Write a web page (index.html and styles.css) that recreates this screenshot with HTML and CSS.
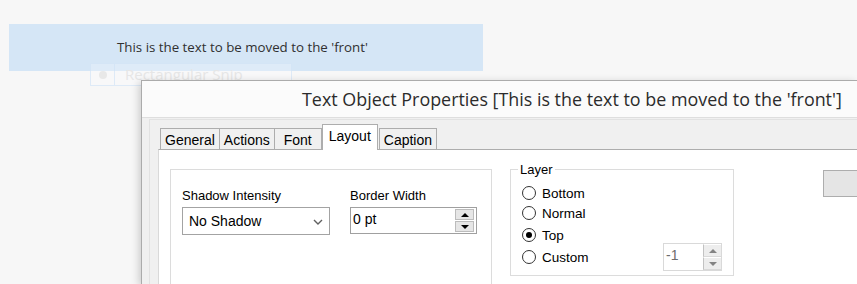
FILE: index.html
```html
<!DOCTYPE html>
<html lang="en">
<head>
    <meta charset="UTF-8">
    <title>Text Object Properties</title>
    <link rel="stylesheet" href="styles.css">
</head>
<body>
    <div class="banner">This is the text to be moved to the 'front'</div>

    <div class="snip">
        <span class="snip-dot"></span>
        <span class="snip-label">Rectangular Snip</span>
    </div>

    <div class="dialog">
        <div class="dialog-title">Text Object Properties [This is the text to be moved to the 'front']</div>
        <div class="dialog-body">
            <div class="tab-control">
                <div class="tabs">
                    <span class="tab">General</span>
                    <span class="tab">Actions</span>
                    <span class="tab">Font</span>
                    <span class="tab tab-active">Layout</span>
                    <span class="tab">Caption</span>
                </div>
                <div class="tab-panel">
                    <div class="group">
                        <div class="field field-shadow">
                            <span class="field-label">Shadow Intensity</span>
                            <div class="select">
                                <span>No Shadow</span>
                                <svg class="chevron" width="10" height="6" viewBox="0 0 10 6">
                                    <path d="M1 1 L5 5 L9 1" fill="none" stroke="#606060" stroke-width="1.4"/>
                                </svg>
                            </div>
                        </div>
                        <div class="field">
                            <span class="field-label">Border Width</span>
                            <div class="spinner spinner-wide">
                                <span class="spinner-value">0 pt</span>
                                <div class="spinner-buttons">
                                    <span class="spin-btn"><span class="arrow-up"></span></span>
                                    <span class="spin-btn"><span class="arrow-down"></span></span>
                                </div>
                            </div>
                        </div>
                    </div>

                    <fieldset class="layer">
                        <legend>Layer</legend>
                        <div class="radio-row"><span class="radio"></span>Bottom</div>
                        <div class="radio-row"><span class="radio"></span>Normal</div>
                        <div class="radio-row radio-row-tall"><span class="radio radio-checked"></span>Top</div>
                        <div class="radio-row">
                            <span class="radio"></span>Custom
                            <div class="spinner spinner-small spinner-disabled">
                                <span class="spinner-value">-1</span>
                                <div class="spinner-buttons">
                                    <span class="spin-btn"><span class="arrow-up"></span></span>
                                    <span class="spin-btn"><span class="arrow-down"></span></span>
                                </div>
                            </div>
                        </div>
                    </fieldset>

                    <span class="button"></span>
                </div>
            </div>
        </div>
    </div>
</body>
</html>
```

FILE: styles.css
```css
body, html {
    margin: 0;
    padding: 0;
}
body {
    width: 857px;
    height: 284px;
    overflow: hidden;
    position: relative;
    background-color: #f7f7f7;
    font-family: "Liberation Sans", Arial, sans-serif;
    font-size: 13px;
    color: #000;
}

/* text object on the sheet */
.banner {
    margin: 24px 0 0 9px;
    width: 366px;
    height: 47px;
    padding-left: 108px;
    line-height: 46px;
    background-color: #d5e6f6;
    font-family: "Open Sans", sans-serif;
    font-size: 13.3px;
    color: #303030;
    white-space: nowrap;
}

/* faded snipping tool menu item */
.snip {
    position: absolute;
    left: 90px;
    top: 63px;
    width: 200px;
    height: 21px;
    display: flex;
    align-items: center;
    border: 1px solid rgba(205, 225, 245, 0.6);
    background-color: rgba(250, 252, 255, 0.25);
}
.snip-dot {
    width: 8px;
    height: 8px;
    margin: 0 7px 0 8px;
    border-radius: 50%;
    background-color: #e8e8e8;
}
.snip-label {
    height: 100%;
    padding-left: 10px;
    border-left: 1px solid rgba(205, 225, 245, 0.6);
    font-family: "Open Sans", sans-serif;
    font-size: 15px;
    line-height: 21px;
    color: #e6e6e6;
}

/* properties dialog */
.dialog {
    position: absolute;
    left: 141px;
    top: 80px;
    width: 715px;
    height: 203px;
    border-top: 1px solid #ababab;
    border-left: 1px solid #ababab;
    box-shadow: -2px 2px 8px rgba(0, 0, 0, 0.18);
    background-color: #f0f0f0;
}
.dialog-title {
    height: 36px;
    padding-left: 160px;
    line-height: 37px;
    background-color: #fbfbfb;
    border-bottom: 1px solid #dedede;
    font-family: "Open Sans", sans-serif;
    font-size: 17.9px;
    color: #2b2b2b;
    white-space: nowrap;
    overflow: hidden;
}
.dialog-body {
    padding: 1px 0 0 7px;
}
.tab-control {
    height: 160px;
    padding: 4px 0 0 8px;
    border-top: 1px solid #e2e2e2;
    border-left: 1px solid #e2e2e2;
}

.tabs {
    display: flex;
    align-items: flex-end;
    height: 25px;
    margin-left: 2px;
}
.tab {
    height: 20px;
    min-width: 38px;
    padding: 0 4px;
    margin-right: -1px;
    border: 1px solid #adadad;
    border-bottom: none;
    background-color: #f0f0f0;
    font-size: 14px;
    line-height: 22px;
    text-align: center;
}
.tab-active {
    position: relative;
    z-index: 1;
    height: 25px;
    margin: 0 1px -1px 1px;
    padding: 0 6px;
    background-color: #fff;
    line-height: 22px;
}

.tab-panel {
    height: 115px;
    display: flex;
    align-items: flex-start;
    padding: 19px 0 0 11px;
    background-color: #fff;
    border-top: 1px solid #adadad;
    border-left: 1px solid #d9d9d9;
}

.group {
    flex-shrink: 0;
    width: 309px;
    height: 96px;
    display: flex;
    align-items: flex-start;
    padding: 18px 0 0 11px;
    border: 1px solid #dcdcdc;
    border-bottom: none;
}
.field {
    display: flex;
    flex-direction: column;
}
.field-shadow {
    margin-right: 20px;
}
.field-label {
    height: 15px;
    line-height: 15px;
    margin-bottom: 4px;
}
.select {
    width: 134px;
    height: 26px;
    display: flex;
    align-items: center;
    justify-content: space-between;
    padding: 0 6px 0 6px;
    border: 1px solid #a3a3a3;
    font-size: 14px;
}
.chevron {
    margin-top: 2px;
}

.spinner {
    display: flex;
    justify-content: space-between;
    border: 1px solid #a0a0a0;
    background-color: #fff;
}
.spinner-wide {
    width: 125px;
    height: 25px;
}
.spinner-value {
    padding: 3px 0 0 2px;
    font-size: 14px;
}
.spinner-buttons {
    display: flex;
    flex-direction: column;
    justify-content: center;
    gap: 1px;
    padding: 1px 2px 1px 0;
}
.spin-btn {
    width: 17px;
    height: 10px;
    display: flex;
    align-items: center;
    justify-content: center;
    border: 1px solid #bcbcbc;
    background-color: #e6e6e6;
}
.arrow-up {
    border-left: 4px solid transparent;
    border-right: 4px solid transparent;
    border-bottom: 4px solid #000;
}
.arrow-down {
    border-left: 4px solid transparent;
    border-right: 4px solid transparent;
    border-top: 4px solid #000;
}

.spinner-small {
    width: 57px;
    height: 26px;
    margin-left: auto;
}
.spinner-disabled {
    border-color: #d9d9d9;
}
.spinner-disabled .spinner-value {
    padding-left: 2px;
    color: #6d6d6d;
}
.spinner-disabled .spinner-buttons {
    padding: 0;
    gap: 0;
}
.spinner-disabled .spin-btn {
    height: 11px;
    border-color: #d9d9d9;
    border-top-color: #fff;
    border-right: none;
    background-color: #ededed;
    border-left: 1px solid #c2c2c2;
}
.spinner-disabled .arrow-up {
    border-bottom-color: #838383;
}
.spinner-disabled .arrow-down {
    border-top-color: #838383;
}

.layer {
    flex-shrink: 0;
    box-sizing: border-box;
    width: 224px;
    height: 114px;
    margin: -7px 0 0 18px;
    padding: 6px 11px 8px 11px;
    border: 1px solid #dcdcdc;
    min-width: 0;
}
.layer legend {
    padding: 0 2px;
    margin-left: -4px;
    line-height: 15px;
}
.radio-row {
    display: flex;
    align-items: center;
    height: 20px;
    font-size: 13.5px;
}
.radio-row-tall {
    height: 24px;
}
.radio {
    width: 12px;
    height: 12px;
    margin-right: 6px;
    border: 1px solid #333;
    border-radius: 50%;
    background-color: #fff;
    box-sizing: content-box;
    position: relative;
}
.radio-checked::after {
    content: "";
    position: absolute;
    left: 3px;
    top: 3px;
    width: 6px;
    height: 6px;
    border-radius: 50%;
    background-color: #000;
}

.button {
    flex: 1;
    height: 25px;
    margin: 1px 0 0 89px;
    border: 1px solid #adadad;
    border-right: none;
    background-color: #e5e5e5;
}
```
